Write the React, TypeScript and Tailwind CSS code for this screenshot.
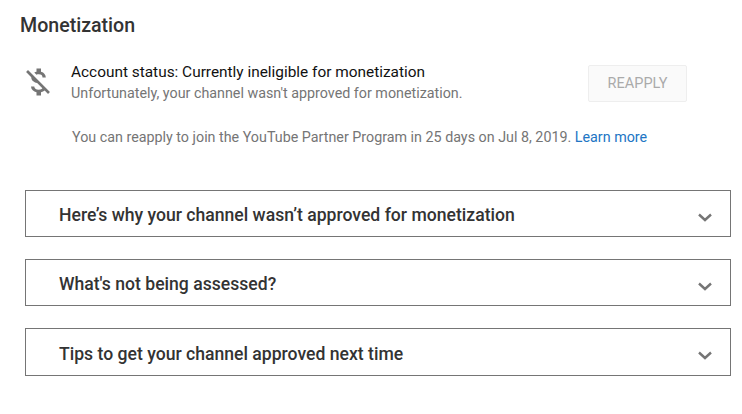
const sections = [
  "Here’s why your channel wasn’t approved for monetization",
  "What's not being assessed?",
  "Tips to get your channel approved next time",
];

function MoneyOff() {
  return (
    <svg width="36" height="36" viewBox="0 0 24 24" fill="#757575" className="shrink-0">
      <path d="M12.5 6.9c1.78 0 2.44.85 2.5 2.1h2.21c-.07-1.72-1.12-3.3-3.21-3.81V3h-3v2.16c-.53.12-1.03.3-1.48.54l1.47 1.47c.41-.17.91-.27 1.51-.27zM5.33 4.06L4.06 5.33 7.5 8.77c0 2.08 1.56 3.21 3.91 3.91l3.51 3.51c-.34.48-1.05.91-2.42.91-2.06 0-2.87-.92-2.98-2.1h-2.2c.12 2.19 1.76 3.42 3.68 3.83V21h3v-2.15c.96-.18 1.83-.55 2.46-1.12l2.22 2.22 1.27-1.27L5.33 4.06z" />
    </svg>
  );
}

function Chevron() {
  return (
    <svg width="14" height="9" viewBox="0 0 14 9" fill="none" stroke="#757575" strokeWidth="2.4">
      <path d="M1 1.5l6 5.5 6-5.5" />
    </svg>
  );
}

export default function App() {
  return (
    <div className="w-[742px] h-[414px] bg-white font-['Roboto',sans-serif] overflow-hidden pt-[14px]">
      <h1 className="ml-5 text-[19.6px] leading-[24px] font-medium text-[#333333]">Monetization</h1>

      <div className="flex mt-[26px] ml-5">
        <MoneyOff />
        <div className="ml-[15px] w-[517px]">
          <p className="-mt-[2px] text-[15.4px] leading-[20px] text-[#111]">Account status: Currently ineligible for monetization</p>
          <p className="mt-[2px] text-[14.3px] leading-[18px] text-[#757575]">Unfortunately, your channel wasn't approved for monetization.</p>
        </div>
        <button className="mt-px w-[99px] h-[37px] border border-[#eeeeee] rounded-[2px] bg-[#fafafa] text-[14.5px] text-[#aaaaaa]">
          REAPPLY
        </button>
      </div>

      <p className="ml-[72px] mt-[25px] text-[14.3px] leading-[20px] text-[#757575]">
        You can reapply to join the YouTube Partner Program in 25 days on Jul 8, 2019.{" "}
        <span className="text-[#2175c4]">Learn more</span>
      </p>

      <div className="flex flex-col gap-[22px] mt-[43px] ml-[25px] w-[706px]">
        {sections.map((title) => (
          <div key={title} className="flex items-center justify-between h-[47px] last:h-[48px] border border-[#757575] pl-[33px] pr-[18px]">
            <span className="mt-[4px] text-[17.6px] font-medium text-[#333333]">{title}</span>
            <span className="mt-[7px] flex">
              <Chevron />
            </span>
          </div>
        ))}
      </div>
    </div>
  );
}
